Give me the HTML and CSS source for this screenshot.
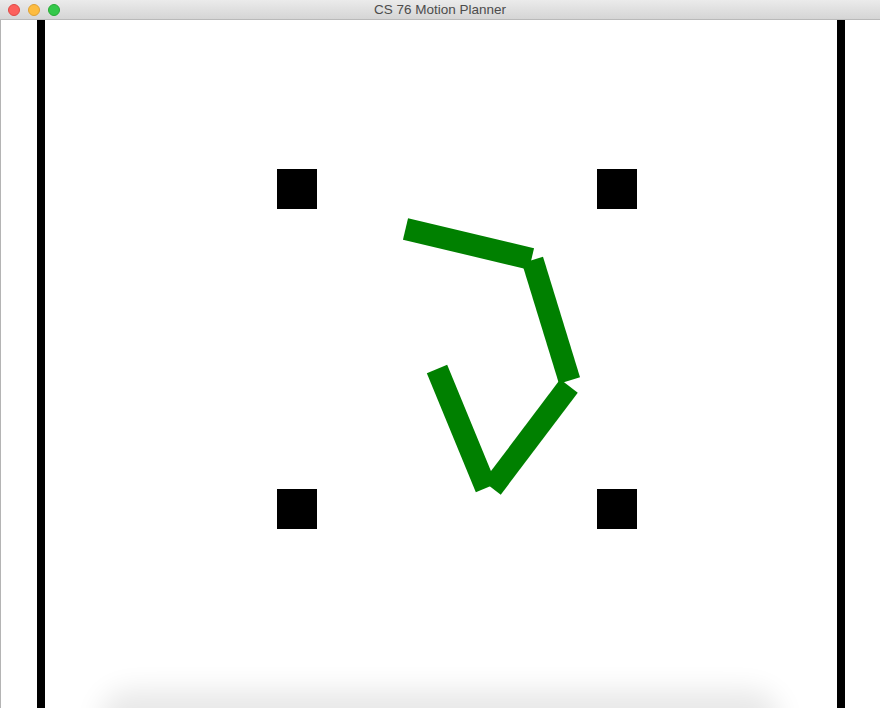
FILE: index.html
```html
<!DOCTYPE html>
<html>
<head>
<meta charset="utf-8">
<title>CS 76 Motion Planner</title>
<link rel="stylesheet" href="styles.css">
</head>
<body>
<div class="window">
  <div class="titlebar">
    <div class="lights">
      <span class="light red"></span>
      <span class="light yellow"></span>
      <span class="light green"></span>
    </div>
    <div class="title">CS 76 Motion Planner</div>
  </div>
  <div class="content">
    <svg class="scene" width="880" height="688" viewBox="0 20 880 688" xmlns="http://www.w3.org/2000/svg">
      <defs>
        <filter id="blur" x="-20%" y="-200%" width="140%" height="500%">
          <feGaussianBlur stdDeviation="14"/>
        </filter>
      </defs>
      <rect x="0" y="20" width="1" height="688" fill="#b4b4b4"/>
      <rect x="100" y="690" width="680" height="60" rx="30" fill="#000" opacity="0.09" filter="url(#blur)"/>
      <rect x="37" y="20" width="8" height="688" fill="#000"/>
      <rect x="837" y="20" width="8" height="688" fill="#000"/>
      <rect x="277" y="169" width="40" height="40" fill="#000"/>
      <rect x="597" y="169" width="40" height="40" fill="#000"/>
      <rect x="277" y="489" width="40" height="40" fill="#000"/>
      <rect x="597" y="489" width="40" height="40" fill="#000"/>
      <g stroke="#008000" stroke-width="22" stroke-linecap="butt">
        <line x1="405.5" y1="229" x2="531.5" y2="259"/>
        <line x1="532.5" y1="260" x2="569.5" y2="380.5"/>
        <line x1="569" y1="386" x2="492" y2="488"/>
        <line x1="486" y1="488" x2="437" y2="369"/>
      </g>
    </svg>
  </div>
</div>
</body>
</html>
```

FILE: styles.css
```css
html, body {
  margin: 0;
  padding: 0;
  background: #ffffff;
  overflow: hidden;
}

.window {
  width: 880px;
  height: 708px;
  display: flex;
  flex-direction: column;
}

.titlebar {
  height: 19px;
  flex: 0 0 19px;
  border-bottom: 1px solid #b9b9b9;
  background: linear-gradient(#ebebeb, #d5d5d5);
  display: flex;
  align-items: center;
  position: relative;
}

.lights {
  display: flex;
  gap: 8px;
  padding-left: 8px;
}

.light {
  width: 12px;
  height: 12px;
  border-radius: 50%;
  box-sizing: border-box;
}

.light.red { background: #fc605c; border: 0.5px solid #de4a45; }
.light.yellow { background: #fdbc40; border: 0.5px solid #dea133; }
.light.green { background: #34c84a; border: 0.5px solid #27aa35; }

.title {
  position: absolute;
  left: 374px;
  top: 2px;
  font-family: "Liberation Sans", Arial, sans-serif;
  font-size: 13.5px;
  color: #4c4c4c;
  line-height: 16px;
}

.content {
  flex: 1;
  background: #fff;
}

.scene {
  display: block;
}
```
